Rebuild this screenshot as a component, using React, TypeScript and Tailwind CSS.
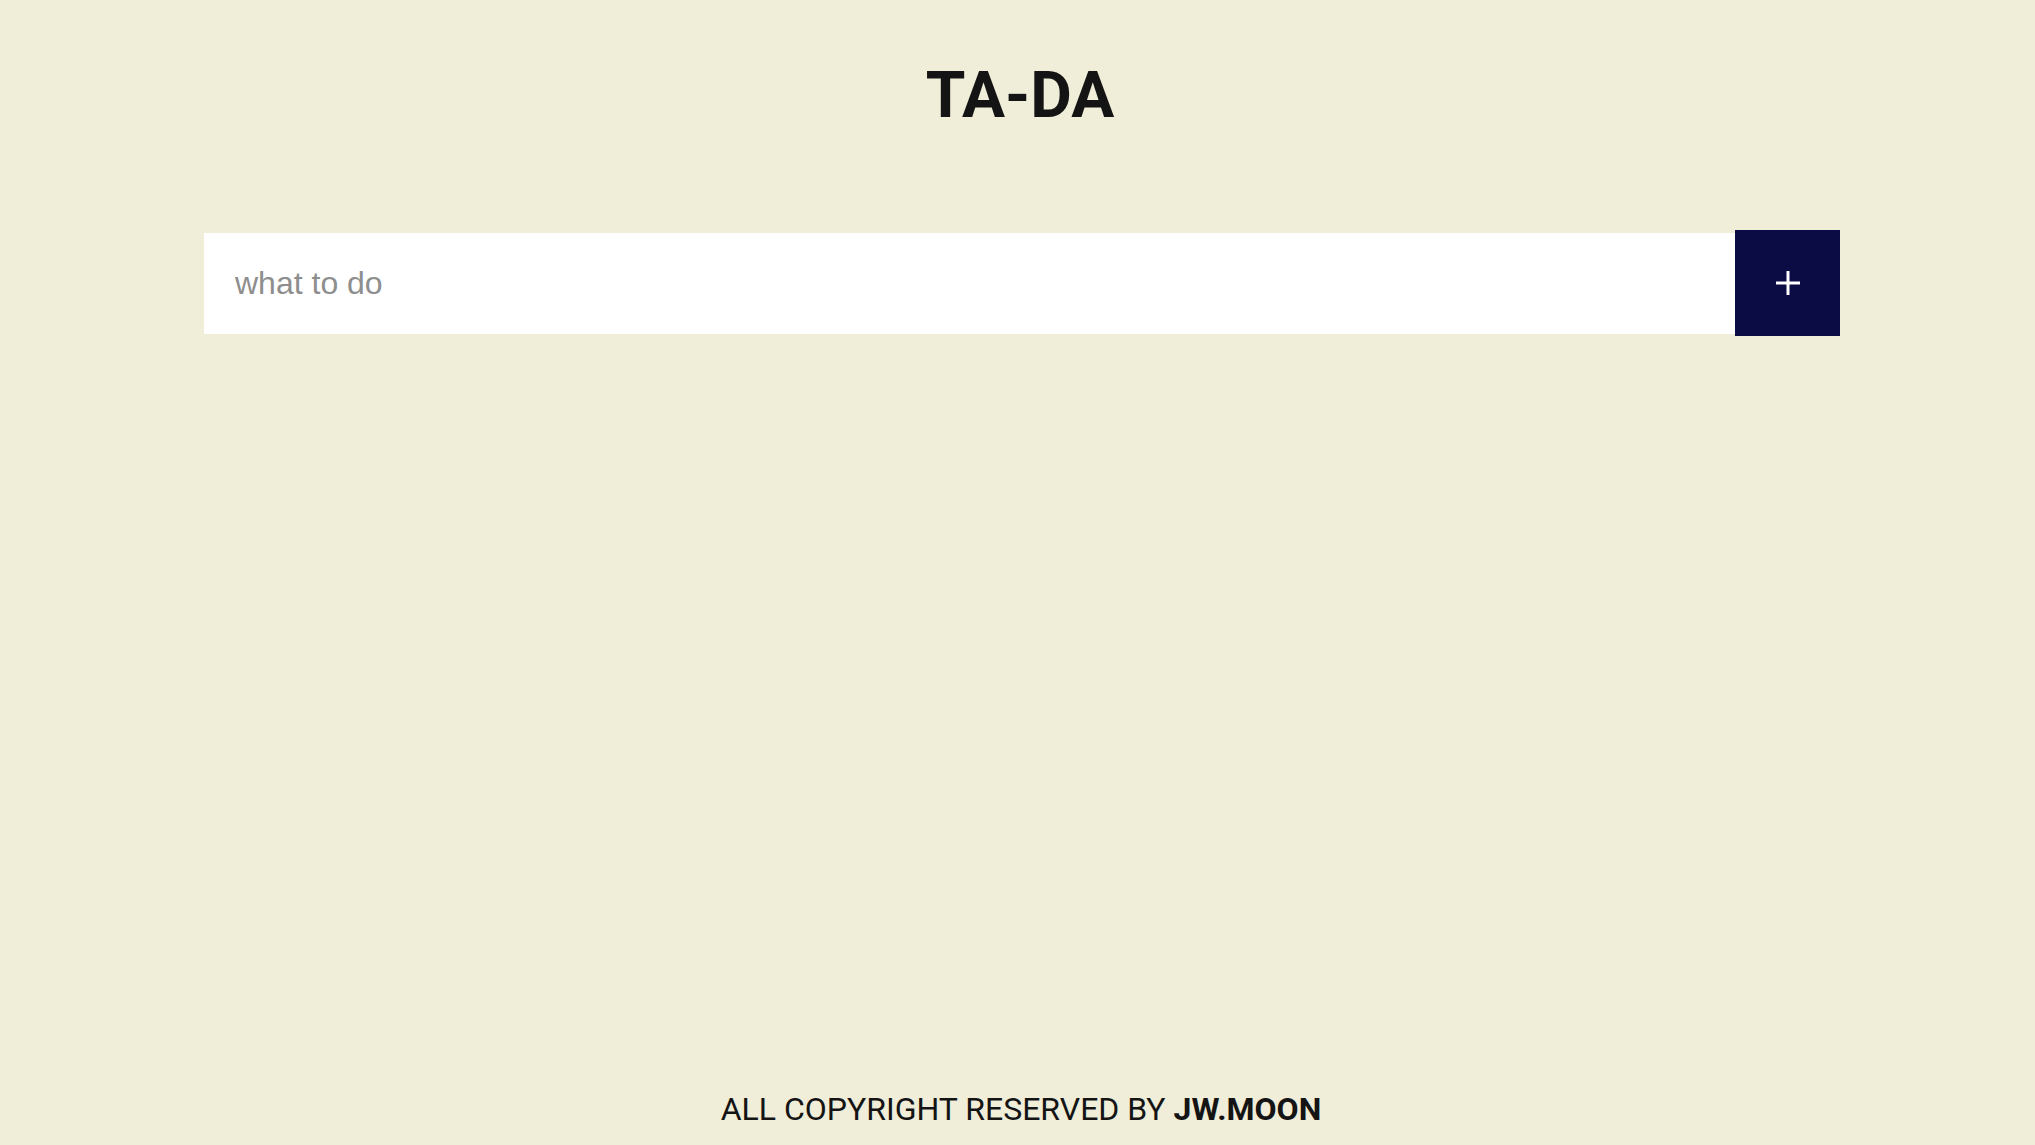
import { useState } from "react";

export default function App() {
  const [text, setText] = useState("");

  return (
    <div className="flex min-h-screen flex-col bg-[#f0edd8] font-['Roboto',sans-serif] text-[#141414]">
      <header className="pl-[5px] pt-[58px]">
        <h1 className="text-center text-[64px] font-bold leading-[75px]">TA-DA</h1>
      </header>

      <main className="flex-1 pt-[97px]">
        <form
          className="ml-[204px] flex w-[1636px] items-center"
          onSubmit={(e) => {
            e.preventDefault();
            setText("");
          }}
        >
          <input
            value={text}
            onChange={(e) => setText(e.target.value)}
            placeholder="what to do"
            className="h-[101px] flex-1 bg-white px-[31px] font-['Liberation_Sans',Arial,sans-serif] text-[32px] text-[#333] outline-none placeholder:text-[#8e8e8e]"
          />
          <button
            type="submit"
            className="flex h-[106px] w-[105px] items-center justify-center bg-[#0b0c44] text-white"
          >
            <svg width="26" height="26" viewBox="0 0 26 26" fill="none">
              <path d="M13 1v24M1 13h24" stroke="currentColor" strokeWidth="3" />
            </svg>
          </button>
        </form>
      </main>

      <footer className="pb-[17px] pl-[7px] text-center text-[32px] leading-[38px]">
        ALL COPYRIGHT RESERVED BY <strong className="font-bold">JW.MOON</strong>
      </footer>
    </div>
  );
}
